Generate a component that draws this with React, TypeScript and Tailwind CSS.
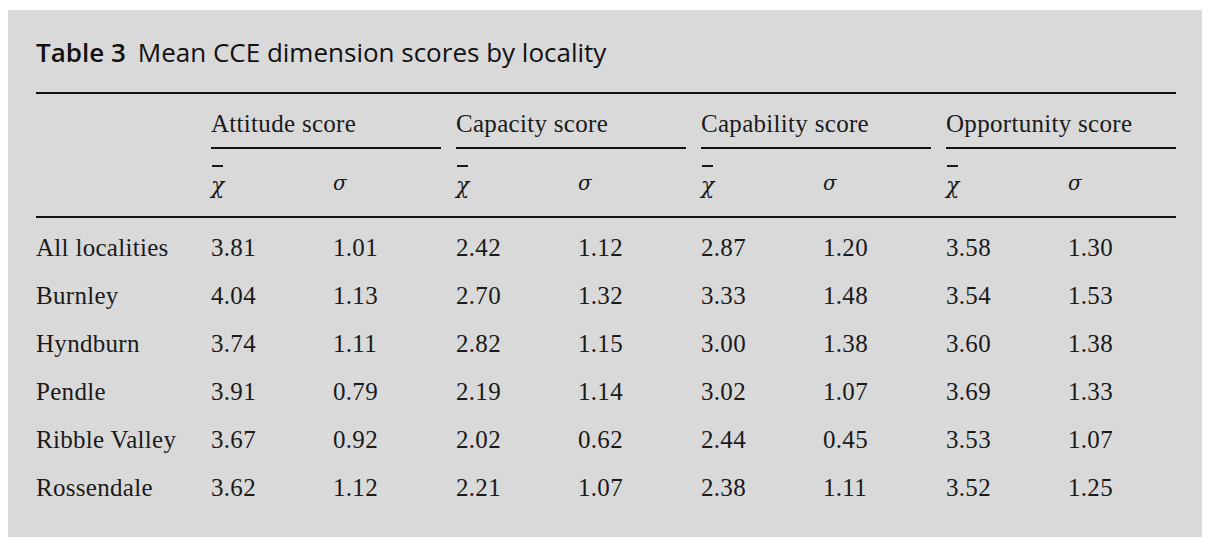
// table 3 reproduction
const groups = ["Attitude score", "Capacity score", "Capability score", "Opportunity score"];

const rows: [string, string[]][] = [
  ["All localities", ["3.81", "1.01", "2.42", "1.12", "2.87", "1.20", "3.58", "1.30"]],
  ["Burnley", ["4.04", "1.13", "2.70", "1.32", "3.33", "1.48", "3.54", "1.53"]],
  ["Hyndburn", ["3.74", "1.11", "2.82", "1.15", "3.00", "1.38", "3.60", "1.38"]],
  ["Pendle", ["3.91", "0.79", "2.19", "1.14", "3.02", "1.07", "3.69", "1.33"]],
  ["Ribble Valley", ["3.67", "0.92", "2.02", "0.62", "2.44", "0.45", "3.53", "1.07"]],
  ["Rossendale", ["3.62", "1.12", "2.21", "1.07", "2.38", "1.11", "3.52", "1.25"]],
];

const serif = "font-['Liberation_Serif',serif] text-[25px] tracking-[0.3px] text-[#1a1a1a]";
const greek = "font-['DejaVu_Serif',serif] italic font-light";

function XBar() {
  return (
    <span className={`relative inline-block text-[22px] ${greek}`}>
      <span className="absolute left-[1px] top-[-4px] h-[1.5px] w-[11px] bg-[#1a1a1a]" />
      χ
    </span>
  );
}

export default function App() {
  return (
    <div className="min-h-screen bg-white pl-[8px] pt-[10px]">
      <div className="h-[527px] w-[1194px] bg-[#d9d9d9] pl-[28px] pt-[26px]">
        {/* title */}
        <div className="font-['Open_Sans',sans-serif] text-[26px] leading-[32px] text-[#111]">
          <span className="font-semibold">Table 3</span>
          <span className="ml-[12px]">Mean CCE dimension scores by locality</span>
        </div>

        <div className="mt-[24px] h-[2px] w-[1140px] bg-[#111]" />

        {/* group headers */}
        <div className={`mt-[14px] flex ${serif}`}>
          <div className="w-[175px]" />
          {groups.map((g, i) => (
            <div key={g} className={i < 3 ? "w-[245px]" : "w-[230px]"}>
              <div className="h-[32px] leading-[32px]">{g}</div>
              <div className="mt-[7px] h-[2px] w-[230px] bg-[#111]" />
            </div>
          ))}
        </div>

        {/* mean / sd symbols */}
        <div className={`mt-[17px] flex h-[32px] items-center ${serif}`}>
          <div className="w-[175px]" />
          {groups.map((g, i) => (
            <div key={g} className={`flex items-center ${i < 3 ? "w-[245px]" : "w-[230px]"}`}>
              <div className="w-[122px] pt-[6px]">
                <XBar />
              </div>
              <div className={`pt-[2px] text-[20px] ${greek}`}>σ</div>
            </div>
          ))}
        </div>

        <div className="mt-[18px] h-[2px] w-[1140px] bg-[#111]" />

        {/* data rows */}
        <div className={`mt-[6px] ${serif}`}>
          {rows.map(([name, vals]) => (
            <div key={name} className="flex h-[48px] items-center">
              <div className="w-[175px]">{name}</div>
              {vals.map((v, j) => (
                <div key={j} className={j % 2 === 0 ? "w-[122px]" : "w-[123px]"}>
                  {v}
                </div>
              ))}
            </div>
          ))}
        </div>
      </div>
    </div>
  );
}
